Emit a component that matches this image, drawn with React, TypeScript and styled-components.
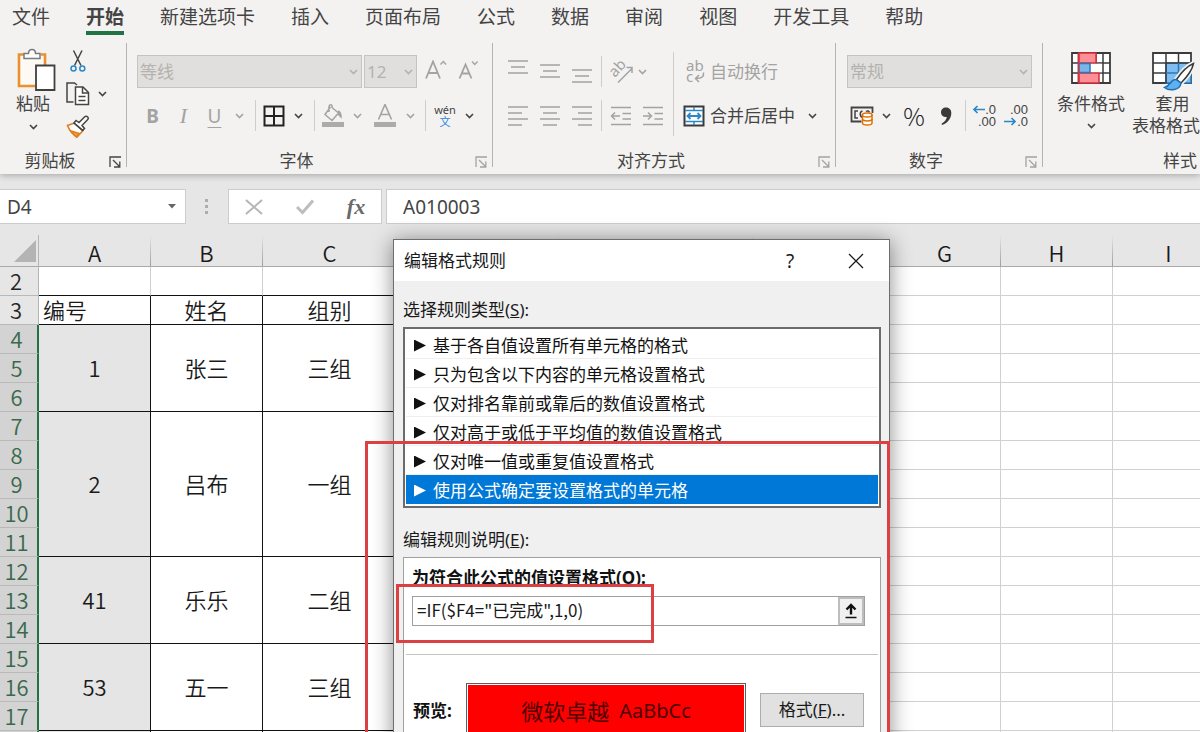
import React from "react";
import styled, { createGlobalStyle, css } from "styled-components";

const UI_FONT = '"Noto Sans", "Noto Sans CJK SC", sans-serif';
const SHEET_FONT = '"Noto Sans CJK SC", sans-serif';
const INK = "#444444";
const MUTED = "#a3a3a3";

const GlobalStyle = createGlobalStyle`
  *, *::before, *::after { box-sizing: border-box; }
  html, body { margin: 0; }
  body { font-family: ${UI_FONT}; color: ${INK}; background: #ffffff; }
  button, input, select { font: inherit; color: inherit; margin: 0; padding: 0; border: 0; background: none; border-radius: 0; }
`;

const Window = styled.div`
  position: relative;
  display: flex;
  flex-direction: column;
  height: 100vh;
  overflow: hidden;
  background: #e6e6e6;
`;

/* ---------- Ribbon ---------- */

const Ribbon = styled.header`
  flex: none;
  background: #f3f2f1;
  box-shadow: 0 1px 7px rgba(0, 0, 0, 0.3);
  white-space: nowrap;
`;

const Tabs = styled.nav`
  display: flex;
  gap: 36px;
  height: 36px;
  padding-left: 12px;
`;

const Tab = styled.button<{ $active?: boolean }>`
  height: 35px;
  padding-top: 4px;
  font-size: 19px;
  line-height: 27px;
  font-weight: ${(p) => (p.$active ? 700 : 400)};
  border-bottom: 4px solid ${(p) => (p.$active ? "#217346" : "transparent")};
`;

const Groups = styled.div`
  display: flex;
  height: 138px;
`;

const Group = styled.section<{ $width?: number }>`
  display: flex;
  flex: none;
  flex-direction: column;
  width: ${(p) => (p.$width ? `${p.$width}px` : "auto")};
`;

const GroupRule = styled.div`
  flex: none;
  width: 1px;
  margin: 7px 0;
  background: #b5b3b1;
`;

const GroupBody = styled.div<{ $left?: number }>`
  display: flex;
  height: 112px;
  padding: 8px 0 0 ${(p) => p.$left ?? 0}px;
`;

const GroupFooter = styled.div<{ $left?: number }>`
  display: flex;
  align-items: center;
  height: 26px;
  padding-left: ${(p) => p.$left ?? 0}px;
`;

const GroupLabel = styled.span`
  flex: 1;
  text-align: center;
  font-size: 17px;
  line-height: 26px;
`;

const OpenGroupLabel = styled.span`
  font-size: 17px;
  line-height: 26px;
`;

const Launcher = styled.button<{ $muted?: boolean }>`
  display: flex;
  justify-content: flex-end;
  width: 26px;
  padding: 2px 5px 0 0;
  color: ${(p) => (p.$muted ? MUTED : INK)};
`;

const Rows = styled.div<{ $left: number }>`
  display: flex;
  flex-direction: column;
  gap: 11px;
  padding: 11px 0 0 ${(p) => p.$left}px;
`;

const Row = styled.div<{ $gap?: number }>`
  display: flex;
  align-items: center;
  gap: ${(p) => p.$gap ?? 0}px;
  height: 33px;
`;

const Tool = styled.button<{ $w: number; $muted?: boolean }>`
  display: flex;
  flex: none;
  align-items: center;
  justify-content: center;
  width: ${(p) => p.$w}px;
  height: 33px;
  color: ${(p) => (p.$muted ? MUTED : INK)};
`;

const Letter = styled.span<{ $bold?: boolean; $italic?: boolean; $underline?: boolean }>`
  font-size: 19px;
  line-height: 24px;
  font-weight: ${(p) => (p.$bold ? 700 : 400)};
  ${(p) => p.$italic && css`font-family: "Liberation Serif", serif; font-style: italic; font-size: 22px;`}
  ${(p) => p.$underline && css`text-decoration: underline; text-underline-offset: 4px; text-decoration-thickness: 1px;`}
`;

const ToolRule = styled.div<{ $m: number; $tall?: boolean }>`
  flex: none;
  width: 1px;
  height: ${(p) => (p.$tall ? 84 : 31)}px;
  margin: ${(p) => (p.$tall ? 8 : 0)}px ${(p) => p.$m}px 0;
  background: #cfcdcb;
`;

const LabelTool = styled.button<{ $muted?: boolean }>`
  display: flex;
  align-items: center;
  gap: 5px;
  height: 33px;
  font-size: 17px;
  line-height: 24px;
  color: ${(p) => (p.$muted ? MUTED : INK)};
`;

const ComboFrame = styled.div<{ $w: number }>`
  display: grid;
  align-items: center;
  width: ${(p) => p.$w}px;
  height: 33px;
  background: #e1dfdd;
  border: 1px solid #c6c4c2;
  color: #b4b2b0;
  > * { grid-area: 1 / 1; }
  > svg { justify-self: end; margin-right: 3px; }
`;

const ComboSelect = styled.select`
  appearance: none;
  width: 100%;
  height: 31px;
  padding-left: 2px;
  font-size: 17px;
  line-height: 31px;
  &:disabled { opacity: 1; color: #b4b2b0; }
`;

const BigTool = styled.button<{ $w: number }>`
  display: flex;
  flex: none;
  flex-direction: column;
  align-items: center;
  width: ${(p) => p.$w}px;
  height: 96px;
  padding-top: 7px;
  font-size: 17px;
  line-height: 22px;
`;

const BigLine = styled.span`
  display: flex;
  align-items: center;
  justify-content: center;
  gap: 4px;
  min-width: 34px;
  height: 22px;
`;

const PasteTool = styled(BigTool)`
  align-items: flex-start;
  gap: 1px;
  padding: 4px 0 0 16px;
`;

const SmallStack = styled.div`
  display: flex;
  flex-direction: column;
`;

const Phonetic = styled.span`
  display: flex;
  flex-direction: column;
  align-items: center;
  font-size: 11px;
  line-height: 12px;
  b { font-weight: 400; color: #2b88d8; }
`;

const Percent = styled.span`
  font-family: ${SHEET_FONT};
  font-weight: 300;
  font-size: 24px;
  line-height: 30px;
  color: #222222;
`;

const Decimals = styled.span`
  display: grid;
  width: 24px;
  font-family: "Liberation Sans", sans-serif;
  font-size: 13px;
  line-height: 12px;
`;

const DecimalLine = styled.span`
  display: flex;
  align-items: center;
  justify-content: flex-end;
  height: 12px;
`;

/* ---------- Formula bar ---------- */

const FormulaBar = styled.div`
  display: flex;
  flex: none;
  height: 61px;
  padding-top: 15px;
  font-size: 19px;
`;

const Field = styled.div<{ $w?: number }>`
  display: flex;
  align-items: center;
  flex: ${(p) => (p.$w ? "none" : "1")};
  width: ${(p) => (p.$w ? `${p.$w}px` : "auto")};
  height: 35px;
  background: #ffffff;
  border: 1px solid #cccccc;
`;

const NameField = styled(Field)`
  border-left: 0;
`;

const InputField = styled(Field)`
  border-right: 0;
`;

const FieldInput = styled.input<{ $pad: number }>`
  flex: 1;
  min-width: 0;
  height: 33px;
  padding-left: ${(p) => p.$pad}px;
`;

const Grip = styled.div`
  display: flex;
  justify-content: center;
  align-items: center;
  width: 42px;
  height: 35px;
`;

const FieldGap = styled.div`
  flex: none;
  width: 4px;
`;

const FieldButton = styled.button<{ $w: number }>`
  display: flex;
  align-items: center;
  justify-content: center;
  width: ${(p) => p.$w}px;
  height: 33px;
`;

const Fx = styled.span`
  font-family: "Liberation Serif", serif;
  font-style: italic;
  font-weight: 700;
  font-size: 22px;
  line-height: 30px;
  color: #6a6a6a;
`;

/* ---------- Sheet ---------- */

const SheetArea = styled.main`
  flex: 1;
  min-height: 0;
  overflow: hidden;
  background: #ffffff;
`;

const Sheet = styled.table`
  table-layout: fixed;
  width: 100%;
  min-width: 1225px;
  border-collapse: separate;
  border-spacing: 0;
  font-family: ${SHEET_FONT};
  font-weight: 350;
  font-size: 22px;
  line-height: 26px;
  color: #1a1a1a;
`;

const Corner = styled.th`
  height: 32px;
  padding: 0;
  background: #e6e6e6;
  border-right: 1px solid #b5b5b5;
  border-bottom: 1px solid #a9a9a9;
  svg { display: block; margin-left: auto; margin-right: 2px; }
`;

const ColHead = styled.th`
  height: 32px;
  padding: 2px 1px 0 0;
  font-weight: 350;
  background: linear-gradient(#e6e6e6, #9d9d9d) right / 1px 100% no-repeat #e6e6e6;
  border-bottom: 1px solid #a9a9a9;
`;

const RowHead = styled.th<{ $selected?: boolean }>`
  height: 29px;
  padding: ${(p) => (p.$selected ? "0 4px 2px 0" : "0 6px 2px 0")};
  font-weight: 350;
  color: ${(p) => (p.$selected ? "#39694c" : "#262626")};
  background: ${(p) => (p.$selected ? "#d3d3d3" : "#e6e6e6")};
  border-bottom: 1px solid #b9b9b9;
  border-right: ${(p) => (p.$selected ? "2px solid #217346" : "1px solid #b5b5b5")};
`;

const Cell = styled.td<{ $ink?: boolean; $under?: boolean; $shade?: boolean; $left?: boolean }>`
  height: 29px;
  padding: ${(p) => (p.$left ? "0 0 2px 4px" : "0 0 2px 0")};
  text-align: ${(p) => (p.$left ? "left" : "center")};
  background: ${(p) => (p.$shade ? "#e5e5e5" : "#ffffff")};
  border-right: 1px solid ${(p) => (p.$ink ? "#111111" : "#d0d0d0")};
  border-bottom: 1px solid ${(p) => (p.$ink || p.$under ? "#111111" : "#d0d0d0")};
`;

/* ---------- Dialog ---------- */

const Dialog = styled.div`
  position: absolute;
  top: 239px;
  left: 393px;
  width: 497px;
  background: #f0f0f0;
  border: 1px solid #6e6e6e;
  box-shadow: 0 2px 20px rgba(0, 0, 0, 0.45);
  font-size: 17px;
  line-height: 24px;
  color: #1a1a1a;
`;

const TitleBar = styled.div`
  display: flex;
  align-items: center;
  height: 41px;
  padding-left: 10px;
  background: #ffffff;
`;

const Title = styled.h1`
  flex: 1;
  margin: 0;
  font-size: 17px;
  font-weight: 400;
`;

const TitleButton = styled.button`
  display: flex;
  align-items: center;
  justify-content: center;
  width: 66px;
  height: 41px;
  font-size: 19px;
`;

const DialogBody = styled.div`
  padding: 17px 8px 0 9px;
`;

const RuleList = styled.fieldset`
  min-width: 0;
  margin: 0;
  padding: 0;
  border: 0;
`;

const Caption = styled.div`
  height: 29px;
`;

const RuleFrame = styled.div`
  padding: 1px 1px 2px;
  background: #ffffff;
  border: 2px solid #6b6b6b;
`;

const Rule = styled.label<{ $selected?: boolean }>`
  display: flex;
  align-items: center;
  gap: 7px;
  height: 29px;
  padding: 3px 0 0 8px;
  color: ${(p) => (p.$selected ? "#ffffff" : "#111111")};
  background: ${(p) => (p.$selected ? "#0078d7" : "#ffffff")};
  border-bottom: 1px solid ${(p) => (p.$selected ? "#0078d7" : "#efefef")};
`;

const RuleMark = styled.input`
  appearance: none;
  width: 12px;
  height: 12px;
  background: currentColor;
  clip-path: polygon(0 0, 100% 50%, 0 100%);
`;

const EditCaption = styled(Caption)`
  margin-top: 20px;
`;

const EditFrame = styled.div`
  background: #ffffff;
  border: 1px solid #a0a0a0;
`;

const FormulaBlock = styled.div`
  margin: 0 2px;
  padding: 8px 13px 28px 6px;
  border-bottom: 1px solid #c4c4c4;
`;

const BoldLabel = styled.label`
  display: block;
  font-weight: 700;
  color: #111111;
`;

const FormulaField = styled.div`
  display: flex;
  height: 30px;
  margin-top: 6px;
  border: 1px solid #a0a0a0;
`;

const FormulaInput = styled.input`
  flex: 1;
  min-width: 0;
  height: 28px;
  padding: 0 0 3px 4px;
  font-family: ${SHEET_FONT};
`;

const PickButton = styled.button`
  display: flex;
  align-items: center;
  justify-content: center;
  width: 26px;
  background: #f0f0f0;
  border: 2px solid #bdbdbd;
`;

const PreviewRow = styled.div`
  display: flex;
  align-items: flex-start;
  padding: 28px 16px 24px 9px;
`;

const PreviewLabel = styled.span`
  width: 53px;
  padding-top: 16px;
  font-weight: 700;
  color: #111111;
`;

const Preview = styled.div`
  flex: 1;
  padding: 1px;
  border: 1px solid #5c5c5c;
  background: #ffffff;
`;

const Swatch = styled.div`
  display: flex;
  justify-content: center;
  gap: 10px;
  height: 54px;
  background: #ff0000;
  color: #4d0000;
  font-size: 22px;
  line-height: 52px;
`;

const SwatchLatin = styled.span`
  font-size: 20px;
`;

const PushButton = styled.button`
  width: 104px;
  height: 34px;
  margin: 10px 0 0 14px;
  background: #e1e1e1;
  border: 1px solid #adadad;
`;

const BigMark = styled.div`
  position: absolute;
  top: 201px;
  right: -1px;
  bottom: 0;
  left: -29px;
  border: 3px solid #dd4043;
  pointer-events: none;
`;

const FormulaMark = styled.div`
  position: absolute;
  top: 344px;
  left: 2px;
  width: 258px;
  height: 59px;
  border: 3px solid #dd4043;
  pointer-events: none;
`;

/* ---------- Icons ---------- */

type IconProps = { w: number; h: number; children: React.ReactNode; color?: string; sw?: number };
const Icon = ({ w, h, children, color = "currentColor", sw = 1.5 }: IconProps) => (
  <svg width={w} height={h} viewBox={`0 0 ${w} ${h}`} fill="none" stroke={color} strokeWidth={sw} aria-hidden="true">
    {children}
  </svg>
);

const IconLetters = styled.text`
  font-family: "Noto Sans", sans-serif;
  font-size: 15px;
  fill: currentColor;
  stroke: none;
`;

const Chevron = () => (
  <Icon w={9} h={6} sw={1.6}>
    <path d="M1 1l3.5 3.5L8 1" />
  </Icon>
);

const LauncherIcon = () => (
  <Icon w={12} h={12} sw={1.3}>
    <path d="M1 11V1h11M4 4l6.500 6.500M10.800 5.500v5.500H5" />
  </Icon>
);

const PasteIcon = () => (
  <Icon w={40} h={44}>
    <path d="M4 7h24v11H19v20H4z" fill="#fdfaf6" stroke="none" />
    <path d="M8 6.500H3v31.500H19M29 18V6.500h-4" stroke="#e8912d" strokeWidth="2.600" />
    <path d="M8 10.500V5.500h4.500c0-5.500 7-5.500 7 0H24v5z" fill="#fff" stroke="#7a7a7a" />
    <path d="M20 17.500h18.500V42H20z" fill="#fff" stroke="#404040" strokeWidth="1.800" />
  </Icon>
);

const ScissorsIcon = () => (
  <Icon w={16} h={22} color="#444">
    <path d="M3.500 0.500L11 15.500M12 0.500L4.500 15.500" />
    <circle cx="3.500" cy="18.500" r="2.500" stroke="#2b88c8" />
    <circle cx="12.300" cy="18.500" r="2.500" stroke="#2b88c8" />
  </Icon>
);

const CopyIcon = () => (
  <Icon w={24} h={24} color="#444">
    <path d="M7.500 20H1V1h7.500l2.500 2" />
    <path d="M9.500 5H17l5.500 5.500V22.500h-13z" fill="#fff" />
    <path d="M16.500 5v6h6M12.500 14.500h7M12.500 18.500h7" />
  </Icon>
);

const BrushIcon = () => (
  <Icon w={24} h={24} color="#444">
    <path d="M8.500 8L1.500 10.500c2 5 5 9 9.500 11.500L17 15.500z" fill="#fff" stroke="#e07f1c" strokeWidth="1.600" />
    <path d="M5 16l8 2.500-2.500 3.500z" fill="#f5a44a" stroke="#e07f1c" />
    <path d="M8 8l2-2.500 3 2 5.500-5.500c2-2 5 .5 3 2.800L16 10.500l2.500 3-2 2z" fill="#fff" />
    <path d="M8 8l9 7.500" />
  </Icon>
);

const GrowFont = ({ down = false }: { down?: boolean }) => (
  <Icon w={22} h={24} sw={1.8}>
    {down ? (
      <>
        <path d="M1.500 18.500L7.500 4.500l6 14M3.800 13.500h7.500" />
        <path d="M14 1.500l2.800 3 2.800-3" strokeWidth="1.400" />
      </>
    ) : (
      <>
        <path d="M1 18.500L8 1.500l7 17M3.500 13h9" />
        <path d="M15.500 4.500l2.800-3 2.800 3" strokeWidth="1.400" />
      </>
    )}
  </Icon>
);

const BordersIcon = () => (
  <Icon w={22} h={22} color="#222" sw={2}>
    <path d="M1.500 1.500h19v19h-19zM11 1.500v19M1.500 11h19" />
  </Icon>
);

const FillIcon = () => (
  <Icon w={24} h={24}>
    <path d="M9.500 3L4 10.500l7 6L17.500 9 11 3.500V1.500c-1.500-1.500-3.500-.5-3 3V8" />
    <path d="M17 7c2 .5 3 2.500 3 6l-3-3" fill="currentColor" />
    <path d="M1 18h22v5H1z" fill="#ababab" stroke="none" />
  </Icon>
);

const FontColorIcon = () => (
  <Icon w={24} h={24} sw={1.6}>
    <path d="M5.500 15.500L12 .5l6.500 15M7.800 10.500h8.400" />
    <path d="M1 18h22v5H1z" fill="#ababab" stroke="none" />
  </Icon>
);

type LinesProps = { spans: [number, number][]; top?: number; step?: number; h?: number };
const Lines = ({ spans, top = 1, step = 6, h = 20 }: LinesProps) => (
  <Icon w={22} h={h} sw={1.5}>
    <path d={spans.map(([a, b], i) => `M${a} ${top + i * step}H${b}`).join("")} />
  </Icon>
);

const OrientIcon = () => (
  <Icon w={26} h={26} sw={1.5}>
    <IconLetters x="0" y="0" transform="translate(7 19) rotate(-48)">ab</IconLetters>
    <path d="M10 23.500L24 9.500M18.500 8.500H24V14" />
  </Icon>
);

const WrapIcon = () => (
  <Icon w={22} h={26} sw={1.5}>
    <IconLetters x="3" y="12">ab</IconLetters>
    <IconLetters x="3" y="23">c</IconLetters>
    <path d="M20.500 13.500c.5 4-1.500 6-8 6M16 16l-3.500 3.500L16 23" />
  </Icon>
);

const IndentIcon = ({ right = false }: { right?: boolean }) => (
  <Icon w={22} h={20}>
    <path d="M1 1.500h20M1 18.500h20M12.500 7.500H21M12.500 13H21" />
    <path d={right ? "M1 10h8.500M6 6.500L9.500 10 6 13.500" : "M10 10H1.500M5 6.500L1.500 10 5 13.500"} />
  </Icon>
);

const MergeIcon = () => (
  <Icon w={22} h={22} color="#2b88c8">
    <path d="M1.500 1.500h19v19h-19z" stroke="#3b3b3b" fill="#fff" strokeWidth="2" />
    <path d="M2 5.500h18M2 16.500h18M11 2v3.500M11 16.500V20" />
    <path d="M4.500 11h13M7.500 8l-3 3 3 3M14.500 8l3 3-3 3" strokeWidth="1.800" />
  </Icon>
);

const CurrencyIcon = () => (
  <Icon w={24} h={20} color="#444">
    <path d="M11.500 15.500H1.500v-14H22.500V7" strokeWidth="1.800" />
    <path d="M8 5H5v7h3M12.500 11.500c-3-1-3-6 0-6.500M16 5.500c1.500-1 3-.5 3.500 1" />
    <path d="M12.500 9v8c0 2.700 9.500 2.700 9.500 0V9z" fill="#fff" stroke="#e07000" />
    <ellipse cx="17.200" cy="9" rx="4.800" ry="2" fill="#fff" stroke="#e07000" />
    <path d="M12.500 13c0 2.500 9.500 2.500 9.500 0" stroke="#e07000" />
  </Icon>
);

const CommaIcon = () => (
  <Icon w={12} h={20} color="#3a3a3a">
    <path d="M6 1.500c3.500 0 5.500 2.500 5.300 6C11 13 7.500 17 2 19l-.5-1.200C4.500 16 6.500 13.500 6.800 11 3.500 11.500 1 9.500 1 6.500 1 3.500 3 1.500 6 1.500z" fill="#3a3a3a" stroke="none" />
  </Icon>
);

const Arrow = ({ right = false }: { right?: boolean }) => (
  <Icon w={13} h={9} color="#2b88c8" sw={1.7}>
    <path d={right ? "M0 4.500h11M7.500 1L11 4.500 7.500 8" : "M13 4.500H2M5.500 1L2 4.500 5.500 8"} />
  </Icon>
);

const CondFormatIcon = () => (
  <Icon w={40} h={42} color="#3b3b3b">
    <path d="M1 2h38v30H1z" fill="#fff" strokeWidth="1.800" />
    <path d="M1 12h38M1 22h38M7.500 2v30M25 2v30M32 2v30" />
    <path d="M8 2h17v10H8zM8 22h20v10H8z" fill="#ff8f97" stroke="#d6303a" />
    <path d="M20 12.800h11v8.400H20z" fill="#fff" stroke="none" />
    <path d="M8 12.500h11v9H8z" fill="#7ab6ea" stroke="#2b78b8" />
    <path d="M7.500 2v30" stroke="#d6303a" />
  </Icon>
);

const TableFormatIcon = () => (
  <Icon w={44} h={42} color="#3b3b3b">
    <path d="M2 2h38v30H2z" fill="#fff" strokeWidth="1.800" />
    <path d="M15 12h25v20H15z" fill="#7fbdf0" stroke="#2b78b8" />
    <path d="M2 12h38M2 22h13M15 2v30M27.500 2v10" />
    <path d="M15 22h25M27.500 12v20" stroke="#2b78b8" />
    <path d="M42.500 12.500c-7 3-13 10-17 16l4.500 3.500c5-5 11-12 12.500-19.500z" fill="#fff" stroke="#f3f2f1" strokeWidth="5" />
    <path d="M42.500 12.500c-7 3-13 10-17 16l4.500 3.500c5-5 11-12 12.500-19.500z" fill="#fff" />
    <path d="M25 28.500c-6-.5-4.500 6-11.500 8 5 4 15.500 3 16.500-4.500z" fill="#5fb0f0" stroke="#1d6fb0" />
  </Icon>
);

/* ---------- Data ---------- */

const TABS = ["文件", "开始", "新建选项卡", "插入", "页面布局", "公式", "数据", "审阅", "视图", "开发工具", "帮助"];

const RULES = [
  "基于各自值设置所有单元格的格式",
  "只为包含以下内容的单元格设置格式",
  "仅对排名靠前或靠后的数值设置格式",
  "仅对高于或低于平均值的数值设置格式",
  "仅对唯一值或重复值设置格式",
  "使用公式确定要设置格式的单元格",
];

/* Columns D to F lie behind the dialog and carry no heading. */
const COLUMNS: { id: number; name?: string; width?: number }[] = [
  { id: 1, name: "A", width: 112 },
  { id: 2, name: "B", width: 112 },
  { id: 3, name: "C", width: 134 },
  { id: 4, width: 162 },
  { id: 5, width: 194 },
  { id: 6, width: 136 },
  { id: 7, name: "G", width: 112 },
  { id: 8, name: "H", width: 112 },
  { id: 9, name: "I" },
];

const RECORDS = [
  { start: 4, span: 3, values: ["1", "张三", "三组"] },
  { start: 7, span: 5, values: ["2", "吕布", "一组"] },
  { start: 12, span: 3, values: ["41", "乐乐", "二组"] },
  { start: 15, span: 3, values: ["53", "五一", "三组"] },
];

const Combo = ({ w, value, label }: { w: number; value: string; label: string }) => (
  <ComboFrame $w={w}>
    <ComboSelect disabled aria-label={label}>
      <option>{value}</option>
    </ComboSelect>
    <Chevron />
  </ComboFrame>
);

const GroupEnd = ({ label, muted }: { label: string; muted?: boolean }) => (
  <GroupFooter>
    <GroupLabel>{label}</GroupLabel>
    <Launcher $muted={muted} aria-label={label}>
      <LauncherIcon />
    </Launcher>
  </GroupFooter>
);

const Blank = () => (
  <>
    {COLUMNS.slice(3).map((c) => (
      <Cell key={c.id} />
    ))}
  </>
);

const CENTERED: [number, number][] = [[1, 21], [4, 18], [1, 21]];

function RibbonBar() {
  return (
    <Ribbon>
      <Tabs>
        {TABS.map((t) => (
          <Tab key={t} $active={t === "开始"}>{t}</Tab>
        ))}
      </Tabs>
      <Groups>
        <Group $width={126}>
          <GroupBody>
            <PasteTool $w={66}>
              <PasteIcon />
              <BigLine>粘贴</BigLine>
              <BigLine><Chevron /></BigLine>
            </PasteTool>
            <SmallStack>
              <Tool $w={24} aria-label="剪切"><ScissorsIcon /></Tool>
              <Row>
                <Tool $w={24} aria-label="复制"><CopyIcon /></Tool>
                <Tool $w={24} aria-label="复制选项"><Chevron /></Tool>
              </Row>
              <Tool $w={24} aria-label="格式刷"><BrushIcon /></Tool>
            </SmallStack>
          </GroupBody>
          <GroupEnd label="剪贴板" />
        </Group>
        <GroupRule />

        <Group $width={365}>
          <GroupBody>
            <Rows $left={10}>
              <Row $gap={2}>
                <Combo w={225} value="等线" label="字体" />
                <Combo w={53} value="12" label="字号" />
                <Tool $w={34} $muted aria-label="增大字号"><GrowFont /></Tool>
                <Tool $w={28} $muted aria-label="减小字号"><GrowFont down /></Tool>
              </Row>
              <Row>
                <Tool $w={31} $muted><Letter $bold>B</Letter></Tool>
                <Tool $w={31} $muted><Letter $italic>I</Letter></Tool>
                <Tool $w={31} $muted><Letter $underline>U</Letter></Tool>
                <Tool $w={18} $muted aria-label="下划线选项"><Chevron /></Tool>
                <ToolRule $m={7} />
                <Tool $w={22} aria-label="边框"><BordersIcon /></Tool>
                <Tool $w={26} aria-label="边框选项"><Chevron /></Tool>
                <ToolRule $m={3} />
                <Tool $w={30} $muted aria-label="填充颜色"><FillIcon /></Tool>
                <Tool $w={18} $muted aria-label="填充选项"><Chevron /></Tool>
                <Tool $w={38} $muted aria-label="字体颜色"><FontColorIcon /></Tool>
                <Tool $w={12} $muted aria-label="颜色选项"><Chevron /></Tool>
                <ToolRule $m={9} />
                <Tool $w={20}><Phonetic>wén<b>文</b></Phonetic></Tool>
                <Tool $w={28} aria-label="拼音选项"><Chevron /></Tool>
              </Row>
            </Rows>
          </GroupBody>
          <GroupEnd label="字体" muted />
        </Group>
        <GroupRule />

        <Group $width={342}>
          <GroupBody>
            <Rows $left={9}>
              <Row>
                <Tool $w={32} $muted aria-label="顶端对齐"><Lines spans={CENTERED} top={2} h={26} /></Tool>
                <Tool $w={32} $muted aria-label="垂直居中"><Lines spans={CENTERED} top={6} h={26} /></Tool>
                <Tool $w={32} $muted aria-label="底端对齐"><Lines spans={CENTERED} top={11} h={26} /></Tool>
                <ToolRule $m={3} />
                <Tool $w={32} $muted aria-label="方向"><OrientIcon /></Tool>
                <Tool $w={10} $muted aria-label="方向选项"><Chevron /></Tool>
              </Row>
              <Row>
                <Tool $w={32} $muted aria-label="左对齐"><Lines spans={[[1, 21], [1, 15], [1, 21], [1, 15]]} /></Tool>
                <Tool $w={32} $muted aria-label="居中"><Lines spans={[[1, 21], [4, 18], [1, 21], [4, 18]]} /></Tool>
                <Tool $w={32} $muted aria-label="右对齐"><Lines spans={[[1, 21], [7, 21], [1, 21], [7, 21]]} /></Tool>
                <ToolRule $m={3} />
                <Tool $w={32} $muted aria-label="减少缩进"><IndentIcon /></Tool>
                <Tool $w={32} $muted aria-label="增加缩进"><IndentIcon right /></Tool>
              </Row>
            </Rows>
            <ToolRule $m={4} $tall />
            <Rows $left={5}>
              <Row>
                <LabelTool $muted><WrapIcon />自动换行</LabelTool>
              </Row>
              <Row>
                <LabelTool><MergeIcon />合并后居中</LabelTool>
                <Tool $w={34} aria-label="合并选项"><Chevron /></Tool>
              </Row>
            </Rows>
          </GroupBody>
          <GroupEnd label="对齐方式" muted />
        </Group>
        <GroupRule />

        <Group $width={206}>
          <GroupBody>
            <Rows $left={11}>
              <Row>
                <Combo w={185} value="常规" label="数字格式" />
              </Row>
              <Row>
                <Tool $w={30} aria-label="会计数字格式"><CurrencyIcon /></Tool>
                <Tool $w={18} aria-label="货币选项"><Chevron /></Tool>
                <Tool $w={38}><Percent>%</Percent></Tool>
                <Tool $w={26} aria-label="千位分隔"><CommaIcon /></Tool>
                <ToolRule $m={6} />
                <Tool $w={24}>
                  <Decimals>
                    <DecimalLine><Arrow />.0</DecimalLine>
                    <DecimalLine>.00</DecimalLine>
                  </Decimals>
                </Tool>
                <Tool $w={40}>
                  <Decimals>
                    <DecimalLine>.00</DecimalLine>
                    <DecimalLine><Arrow right />.0</DecimalLine>
                  </Decimals>
                </Tool>
              </Row>
            </Rows>
          </GroupBody>
          <GroupEnd label="数字" muted />
        </Group>
        <GroupRule />

        <Group>
          <GroupBody $left={8}>
            <BigTool $w={80}>
              <CondFormatIcon />
              <BigLine>条件格式</BigLine>
              <BigLine><Chevron /></BigLine>
            </BigTool>
            <BigTool $w={83}>
              <TableFormatIcon />
              <BigLine>套用</BigLine>
              <BigLine>表格格式<Chevron /></BigLine>
            </BigTool>
          </GroupBody>
          <GroupFooter $left={120}>
            <OpenGroupLabel>样式</OpenGroupLabel>
          </GroupFooter>
        </Group>
      </Groups>
    </Ribbon>
  );
}

export default function App() {
  return (
    <>
      <GlobalStyle />
      <Window>
        <RibbonBar />
        <FormulaBar>
          <NameField $w={186}>
            <FieldInput $pad={7} defaultValue="D4" aria-label="名称框" />
            <FieldButton $w={26} aria-label="名称列表">
              <Icon w={8} h={5}><path d="M0 0h8L4 4.500z" fill="#666" stroke="none" /></Icon>
            </FieldButton>
          </NameField>
          <Grip>
            <Icon w={4} h={16}><path d="M0 0h3v3H0zM0 6h3v3H0zM0 12h3v3H0z" fill="#adadad" stroke="none" /></Icon>
          </Grip>
          <Field $w={154}>
            <FieldButton $w={50} aria-label="取消">
              <Icon w={18} h={16} color="#b5b5b5" sw={2}><path d="M1 1l16 14M17 1L1 15" /></Icon>
            </FieldButton>
            <FieldButton $w={52} aria-label="输入">
              <Icon w={18} h={16} color="#bdbdbd" sw={3}><path d="M1 8l5.500 5.500L17 1.500" /></Icon>
            </FieldButton>
            <FieldButton $w={50}><Fx>fx</Fx></FieldButton>
          </Field>
          <FieldGap />
          <InputField>
            <FieldInput $pad={16} defaultValue="A010003" aria-label="编辑栏" />
          </InputField>
        </FormulaBar>

        <SheetArea>
          <Sheet>
            <colgroup>
              <col width={39} />
              {COLUMNS.map((c) => (
                <col key={c.id} width={c.width} />
              ))}
            </colgroup>
            <thead>
              <tr>
                <Corner aria-label="全选">
                  <Icon w={22} h={22}><path d="M22 0v22H0z" fill="#b4b4b4" stroke="none" /></Icon>
                </Corner>
                {COLUMNS.map((c) => (
                  <ColHead key={c.id}>{c.name}</ColHead>
                ))}
              </tr>
            </thead>
            <tbody>
              <tr>
                <RowHead>2</RowHead>
                <Cell $under /><Cell $under /><Cell $under />
                <Blank />
              </tr>
              <tr>
                <RowHead>3</RowHead>
                <Cell $ink $left>编号</Cell>
                <Cell $ink>姓名</Cell>
                <Cell $ink>组别</Cell>
                <Blank />
              </tr>
              {RECORDS.flatMap((r) =>
                Array.from({ length: r.span }, (_, i) => (
                  <tr key={r.start + i}>
                    <RowHead $selected>{r.start + i}</RowHead>
                    {i === 0 &&
                      r.values.map((v, c) => (
                        <Cell key={c} rowSpan={r.span} $ink $shade={c === 0}>{v}</Cell>
                      ))}
                    <Blank />
                  </tr>
                ))
              )}
              <tr>
                <RowHead $selected />
                <Cell $ink $shade /><Cell $ink /><Cell $ink />
                <Blank />
              </tr>
            </tbody>
          </Sheet>
        </SheetArea>

        <Dialog role="dialog" aria-labelledby="dialog-title">
          <TitleBar>
            <Title id="dialog-title">编辑格式规则</Title>
            <TitleButton>?</TitleButton>
            <TitleButton aria-label="关闭">
              <Icon w={16} h={16} sw={1.3}><path d="M1 1l14 14M15 1L1 15" /></Icon>
            </TitleButton>
          </TitleBar>
          <DialogBody>
            <RuleList aria-label="规则类型">
              <Caption>选择规则类型(<u>S</u>):</Caption>
              <RuleFrame>
                {RULES.map((r, i) => (
                  <Rule key={r} $selected={i === 5}>
                    <RuleMark type="radio" name="rule" defaultChecked={i === 5} />
                    {r}
                  </Rule>
                ))}
              </RuleFrame>
            </RuleList>
            <EditCaption>编辑规则说明(<u>E</u>):</EditCaption>
            <EditFrame>
              <FormulaBlock>
                <BoldLabel htmlFor="formula">为符合此公式的值设置格式(<u>O</u>):</BoldLabel>
                <FormulaField>
                  <FormulaInput id="formula" defaultValue={'=IF($F4="已完成",1,0)'} />
                  <PickButton aria-label="选取区域">
                    <Icon w={14} h={16} color="#111" sw={2.4}>
                      <path d="M7 11.500V2M2.500 6.500L7 2l4.500 4.500" />
                      <path d="M1.500 14.500h11" strokeWidth="1.500" />
                    </Icon>
                  </PickButton>
                </FormulaField>
              </FormulaBlock>
              <PreviewRow>
                <PreviewLabel>预览:</PreviewLabel>
                <Preview>
                  <Swatch>微软卓越<SwatchLatin>AaBbCc</SwatchLatin></Swatch>
                </Preview>
                <PushButton>格式(<u>F</u>)...</PushButton>
              </PreviewRow>
            </EditFrame>
          </DialogBody>
          <BigMark />
          <FormulaMark />
        </Dialog>
      </Window>
    </>
  );
}
